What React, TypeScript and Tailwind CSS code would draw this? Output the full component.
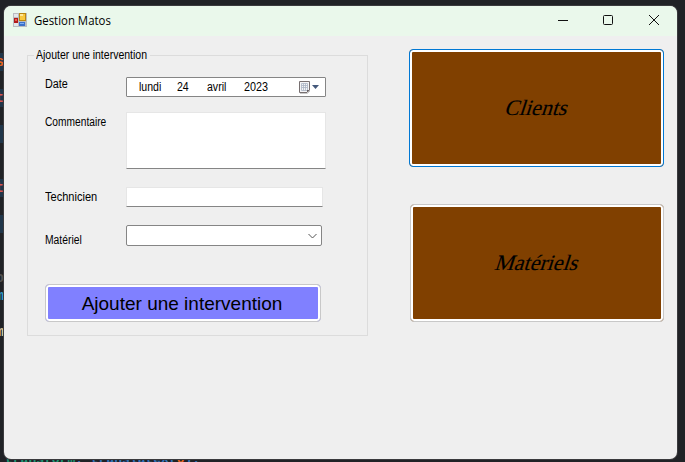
import React from "react";

type LabelProps = { children: React.ReactNode; className?: string };

const Label = ({ children, className = "" }: LabelProps) => (
  <span className={`block origin-left whitespace-nowrap text-[12px] leading-[14px] ${className}`}>{children}</span>
);

const AppIcon = () => (
  <svg width="14" height="14" viewBox="0 0 14 14" shapeRendering="crispEdges">
    <rect width="14" height="14" fill="#b9bcc0" />
    <rect x="1" y="1" width="4" height="3" fill="#e4e6e8" />
    <rect x="1" y="10" width="4" height="3" fill="#e4e6e8" />
    <rect x="1" y="5" width="4" height="5" fill="#b01a1a" />
    <rect x="2" y="6" width="2" height="2" fill="#e8604e" />
    <rect x="6" y="0" width="7" height="8" fill="#b98712" />
    <rect x="7" y="1" width="5" height="6" fill="#f8c83c" />
    <rect x="7" y="1" width="3" height="2" fill="#fde79a" />
    <rect x="6" y="9" width="6" height="4" fill="#3c71c9" />
    <rect x="7" y="10" width="4" height="1" fill="#7fb0f2" />
  </svg>
);

const TitleBar = () => (
  <header className="flex h-[30px] shrink-0 items-center bg-[#eaf8eb] pl-[9px]">
    <div className="mb-[2px]"><AppIcon /></div>
    <h1 className="ml-[7px] w-[200px] origin-left scale-x-[0.95] font-['Open_Sans','Noto_Sans',sans-serif] text-[12px] leading-[16px]">
      Gestion Matos
    </h1>
    <div className="ml-auto flex h-full items-center pr-[17px]">
      <svg className="mb-[2px]" width="102" height="12" viewBox="0 0 102 12" fill="none" stroke="#111">
        <path d="M0 6.5H10" />
        <rect x="45.5" y="1.5" width="9" height="9" rx="1" />
        <path d="M91 1L101 11M101 1L91 11" />
      </svg>
    </div>
  </header>
);

const CalendarGlyph = () => (
  <svg width="24" height="13" viewBox="0 0 24 13">
    <path d="M.5 .5H10.5V9L8 11.5H.5Z" fill="#f4f4f6" stroke="#776f70" />
    <path d="M1 12.5H8.500L11 10" stroke="#c9c9c9" fill="none" />
    <path d="M2.500 2.500H8.500V9.500H2.500ZM4.500 2.500V9.500M6.500 2.500V9.500M2.500 4.500H8.500M2.500 6.500H8.500" stroke="#a9b4c4" fill="none" strokeWidth=".8" />
    <path d="M8 11.500V9H10.500Z" fill="#665f60" />
    <path d="M13 4H20L16.500 8Z" fill="#44597b" />
  </svg>
);

const DateField = () => (
  <div className="flex h-5 w-[200px] items-center rounded-[1px] border border-[#858585] bg-white pl-3">
    <Label className="w-[38px] scale-x-[0.88]">lundi</Label>
    <Label className="w-[30px] scale-x-[0.88]">24</Label>
    <Label className="w-[37px] scale-x-[0.88]">avril</Label>
    <Label className="w-[30px] scale-x-[0.9]">2023</Label>
    <span className="ml-auto pr-[2px]"><CalendarGlyph /></span>
  </div>
);

const MenuButton = ({ children, focused }: { children: React.ReactNode; focused?: boolean }) => (
  <button
    className={`flex h-[118px] items-center justify-center rounded-[4px] border bg-[#804000] pl-[2px] shadow-[inset_0_0_0_2px_white] ${
      focused ? "w-[255px] border-[#0078d4]" : "w-[254px] border-[#c8c8c8]"
    }`}
  >
    <span className="-skew-x-[18deg] font-['Liberation_Serif',serif] text-[22px] leading-none text-black [-webkit-text-stroke:0.15px_black]">
      {children}
    </span>
  </button>
);

const EDITOR_ROWS = [
  { top: 53, mark: "s", style: "bg-[#20364a] text-[#e8641c]" },
  { top: 89, mark: "t", style: "bg-[#20364a] text-[#d8554f]" },
  { top: 125, mark: "", style: "bg-[#20364a] text-[#405060]" },
  { top: 179, mark: "t", style: "bg-[#20364a] text-[#d8554f]" },
  { top: 215, mark: "", style: "bg-[#20364a] text-[#405060]" },
  { top: 269, mark: "o", style: "text-[#505050]" },
  { top: 287, mark: "m", style: "text-[#2d9bc9]" },
  { top: 323, mark: "m", style: "text-[#d5c49a]" },
];

export default function App() {
  return (
    <div className="relative h-[462px] w-[685px] overflow-hidden bg-[#202226] font-['Liberation_Sans',Arial,sans-serif] text-black">
      {EDITOR_ROWS.map((row) => (
        <div
          key={row.top}
          className={`absolute left-0 flex h-[18px] w-1 justify-end overflow-hidden font-['Liberation_Mono',monospace] text-[14px] font-bold leading-[18px] ${row.style}`}
          style={{ top: row.top }}
        >
          {row.mark}
        </div>
      ))}
      <div className="absolute left-[5px] top-[451px] whitespace-pre font-['Liberation_Mono',monospace] text-[13px] font-bold leading-[18px] text-[#3273b8]">
        <span className="text-[#1f9675]">transform</span>: translateX(<span className="text-[#e8641c]">0</span>);
      </div>

      <main className="absolute left-1 top-[6px] flex h-[453px] w-[673px] flex-col overflow-hidden rounded-[7px] bg-[#efefef] shadow-[0_0_0_1px_#3a3a3d]">
        <TitleBar />
        <div className="flex items-start pl-[23px] pt-3">
          <fieldset className="h-[288px] w-[341px] border border-[#dcdcdc] pl-[17px]">
            <legend className="ml-[-11px] h-[14px] w-[116px] pl-[2px]">
              <Label className="w-[127px] scale-x-[0.876]">Ajouter une intervention</Label>
            </legend>
            <div className="mt-[15px] grid grid-cols-[81px_1fr] items-start">
              <Label className="scale-x-[0.9]">Date</Label>
              <DateField />
              <Label className="mt-[18px] scale-x-[0.85]">Commentaire</Label>
              <div className="mt-[15px] h-[57px] w-[200px] border border-[#e6e6e6] border-b-[#858585] bg-white" />
              <Label className="mt-[21px] scale-x-[0.92]">Technicien</Label>
              <div className="mt-[18px] h-5 w-[197px] border border-[#e6e6e6] border-b-[#858585] bg-white" />
              <Label className="mt-[26px] scale-x-[0.86]">Matériel</Label>
              <div className="mt-[18px] flex h-[21px] w-[196px] items-center justify-end rounded-[2px] border border-[#858585] bg-white pr-1">
                <svg width="9" height="6" viewBox="0 0 9 6" fill="none" stroke="#555"><path d="M.5 1L4.500 5L8.500 1" /></svg>
              </div>
            </div>
            <button className="mt-[37px] flex h-[38px] w-[276px] items-center justify-center rounded-[4px] border border-[#c8c8c8] bg-[#8080ff] pr-[2px] shadow-[inset_0_0_0_2px_white]">
              <span className="text-[19px] leading-none">Ajouter une intervention</span>
            </button>
          </fieldset>
          <nav className="ml-[41px] flex flex-col items-end gap-[37px] pt-[1px]">
            <MenuButton focused>Clients</MenuButton>
            <MenuButton>Matériels</MenuButton>
          </nav>
        </div>
      </main>
    </div>
  );
}
